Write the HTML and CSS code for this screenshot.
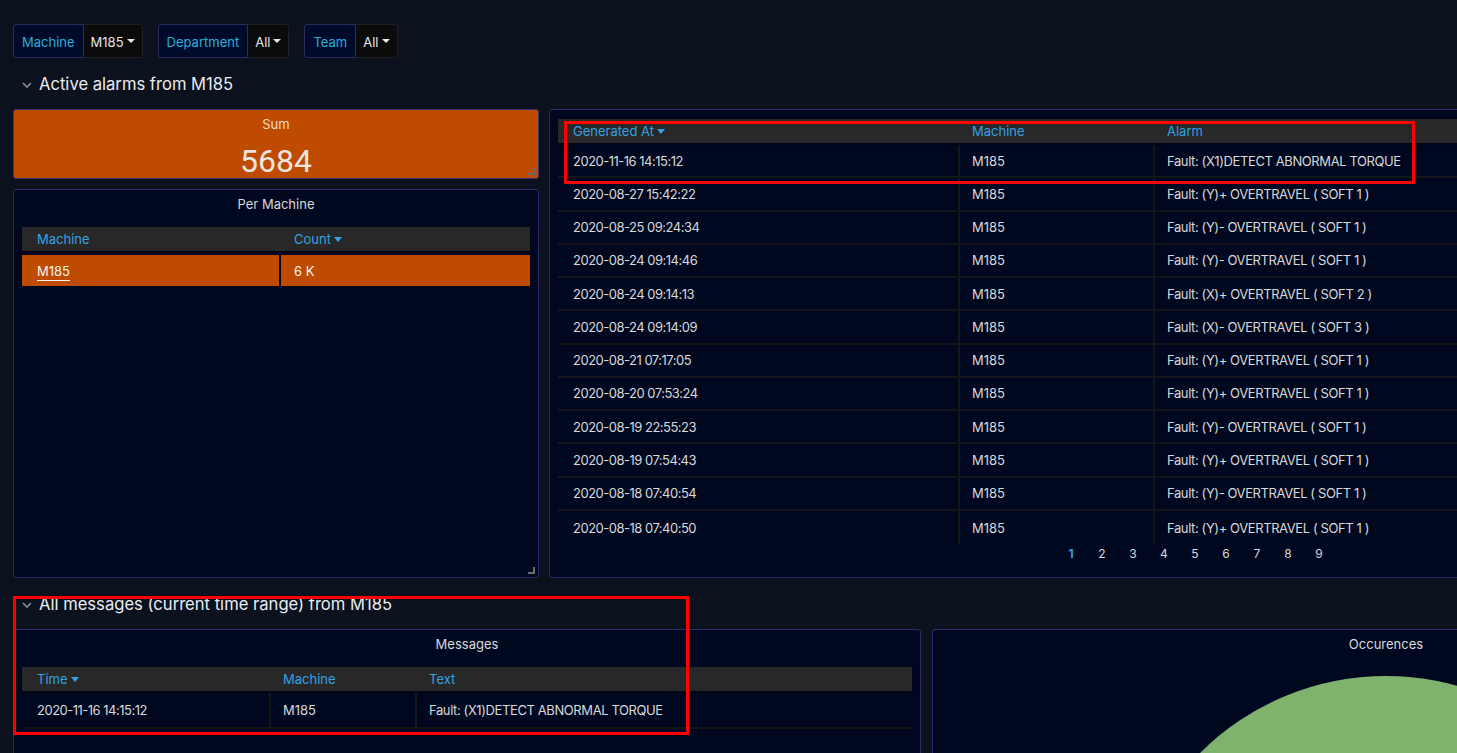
FILE: index.html
```html
<!DOCTYPE html>
<html>
<head>
<meta charset="utf-8">
<link rel="stylesheet" href="styles.css">
</head>
<body>
<div class="page">
  <div class="vars">
    <div class="var"><span class="var-label">Machine</span><span class="var-value">M185 <i class="caret"></i></span></div>
    <div class="var"><span class="var-label">Department</span><span class="var-value">All <i class="caret"></i></span></div>
    <div class="var"><span class="var-label">Team</span><span class="var-value">All <i class="caret"></i></span></div>
  </div>

  <div class="row-title">
    <svg class="chev" width="10" height="6" viewBox="0 0 10 6"><path d="M1 1 L5 5 L9 1" fill="none" stroke="#8e8e8e" stroke-width="1.6"/></svg>
    <span>Active alarms from M185</span>
  </div>

  <div class="grid1">
    <div class="col-left">
      <div class="panel stat resizable">
        <div class="panel-title stat-title">Sum</div>
        <div class="stat-value">5684</div>
      </div>
      <div class="panel per-machine resizable">
        <div class="panel-title">Per Machine</div>
        <div class="tbl pm">
          <div class="thead">
            <div class="th">Machine</div>
            <div class="th">Count <i class="sort"></i></div>
          </div>
          <div class="pm-row">
            <div class="pm-cell"><span class="link">M185</span></div>
            <div class="pm-cell">6 K</div>
          </div>
        </div>
      </div>
    </div>

    <div class="panel alarms">
      <div class="tbl al">
        <div class="thead">
          <div class="th">Generated At <i class="sort"></i></div>
          <div class="th">Machine</div>
          <div class="th">Alarm</div>
        </div>
        <div class="tbody">
          <div class="tr"><div class="td">2020-11-16 14:15:12</div><div class="td">M185</div><div class="td">Fault: (X1)DETECT ABNORMAL TORQUE</div></div>
          <div class="tr"><div class="td">2020-08-27 15:42:22</div><div class="td">M185</div><div class="td">Fault: (Y)+ OVERTRAVEL ( SOFT 1 )</div></div>
          <div class="tr"><div class="td">2020-08-25 09:24:34</div><div class="td">M185</div><div class="td">Fault: (Y)- OVERTRAVEL ( SOFT 1 )</div></div>
          <div class="tr"><div class="td">2020-08-24 09:14:46</div><div class="td">M185</div><div class="td">Fault: (Y)- OVERTRAVEL ( SOFT 1 )</div></div>
          <div class="tr"><div class="td">2020-08-24 09:14:13</div><div class="td">M185</div><div class="td">Fault: (X)+ OVERTRAVEL ( SOFT 2 )</div></div>
          <div class="tr"><div class="td">2020-08-24 09:14:09</div><div class="td">M185</div><div class="td">Fault: (X)- OVERTRAVEL ( SOFT 3 )</div></div>
          <div class="tr"><div class="td">2020-08-21 07:17:05</div><div class="td">M185</div><div class="td">Fault: (Y)+ OVERTRAVEL ( SOFT 1 )</div></div>
          <div class="tr"><div class="td">2020-08-20 07:53:24</div><div class="td">M185</div><div class="td">Fault: (Y)+ OVERTRAVEL ( SOFT 1 )</div></div>
          <div class="tr"><div class="td">2020-08-19 22:55:23</div><div class="td">M185</div><div class="td">Fault: (Y)- OVERTRAVEL ( SOFT 1 )</div></div>
          <div class="tr"><div class="td">2020-08-19 07:54:43</div><div class="td">M185</div><div class="td">Fault: (Y)+ OVERTRAVEL ( SOFT 1 )</div></div>
          <div class="tr"><div class="td">2020-08-18 07:40:54</div><div class="td">M185</div><div class="td">Fault: (Y)- OVERTRAVEL ( SOFT 1 )</div></div>
          <div class="tr last"><div class="td">2020-08-18 07:40:50</div><div class="td">M185</div><div class="td">Fault: (Y)+ OVERTRAVEL ( SOFT 1 )</div></div>
        </div>
      </div>
      <div class="pager">
        <span class="active">1</span><span>2</span><span>3</span><span>4</span><span>5</span><span>6</span><span>7</span><span>8</span><span>9</span>
      </div>
    </div>
  </div>

  <div class="row-title">
    <svg class="chev" width="10" height="6" viewBox="0 0 10 6"><path d="M1 1 L5 5 L9 1" fill="none" stroke="#8e8e8e" stroke-width="1.6"/></svg>
    <span>All messages (current time range) from M185</span>
  </div>

  <div class="grid2">
    <div class="panel messages">
      <div class="panel-title">Messages</div>
      <div class="tbl msg">
        <div class="thead">
          <div class="th">Time <i class="sort"></i></div>
          <div class="th">Machine</div>
          <div class="th">Text</div>
        </div>
        <div class="tr"><div class="td">2020-11-16 14:15:12</div><div class="td">M185</div><div class="td">Fault: (X1)DETECT ABNORMAL TORQUE</div></div>
      </div>
    </div>
    <div class="panel occ">
      <div class="panel-title">Occurences</div>
      <div class="pie-wrap">
        <svg class="pie" width="526" height="526" viewBox="0 0 526 526"><circle cx="263" cy="263" r="263" fill="#7eb26d"/></svg>
      </div>
    </div>
  </div>

  <div class="annot annot-1"></div>
  <div class="annot annot-2"></div>
</div>
</body>
</html>
```

FILE: styles.css
```css
* { box-sizing: border-box; }
html, body {
  margin: 0;
  padding: 0;
  width: 1457px;
  height: 753px;
  overflow: hidden;
  background: #0c111e;
}
body {
  font-family: Inter, "Noto Sans", sans-serif;
  font-size: 13px;
  color: #d8d9da;
}
.page {
  position: relative;
  padding: 24px 0 0 13px;
  width: 1900px;
}

/* variables */
.vars {
  display: flex;
  gap: 15px;
  height: 34px;
}
.var {
  display: flex;
  height: 34px;
}
.var-label {
  display: flex;
  align-items: center;
  padding: 1px 8px 0;
  background: #000a2a;
  border: 1px solid #2c2b5e;
  border-radius: 3px 0 0 3px;
  color: #26b0d6;
}
.var-value {
  display: flex;
  align-items: center;
  gap: 3px;
  padding: 1px 7px 0;
  background: #0b0b0c;
  border: 1px solid #1f1f24;
  border-left: none;
  border-radius: 0 3px 3px 0;
  color: #e6e6e6;
}
.caret {
  display: inline-block;
  width: 0;
  height: 0;
  border-left: 4px solid transparent;
  border-right: 4px solid transparent;
  border-top: 4px solid #e6e6e6;
  margin-top: -2px;
}

/* row titles */
.row-title {
  height: 51px;
  display: flex;
  align-items: center;
  gap: 7px;
  padding-left: 9px;
  font-size: 16.6px;
  color: #e9edf2;
}
.chev { margin-top: 3px; }

/* panels */
.panel {
  position: relative;
  background: #000820;
  border: 1px solid #2e2c68;
  border-radius: 3px;
}
.resizable::after {
  content: "";
  position: absolute;
  right: 3px;
  bottom: 3px;
  width: 5px;
  height: 5px;
  border-right: 2px solid #6b6b6b;
  border-bottom: 2px solid #6b6b6b;
}
.panel-title {
  text-align: center;
  height: 30px;
  line-height: 29px;
  color: #d8d9da;
}

.grid1 {
  display: grid;
  grid-template-columns: 526px 1292px;
  gap: 10px;
  height: 469px;
}
.col-left {
  display: flex;
  flex-direction: column;
  gap: 10px;
}
.stat {
  height: 70px;
  background: #bf4b00;
  border-color: #3a2f6a;
}
.stat-title { color: #f2dccb; height: 30px; line-height: 29px; }
.stat-value {
  text-align: center;
  font-family: Roboto, "Liberation Sans", sans-serif;
  font-size: 32px;
  line-height: 34px;
  margin-top: 4px;
  color: #ece6e0;
}
.per-machine { flex: 1; }

/* tables */
.tbl { margin: 0 8px; }
.thead {
  display: grid;
  height: 24px;
  background: #282828;
  box-shadow: 0 1px 2px rgba(0,0,0,0.5);
}
.th {
  display: flex;
  align-items: center;
  gap: 3px;
  color: #33a2e5;
}
.sort {
  display: inline-block;
  width: 0;
  height: 0;
  border-left: 4px solid transparent;
  border-right: 4px solid transparent;
  border-top: 5px solid #33a2e5;
}
.tr {
  display: grid;
  border-bottom: 2px solid #15161c;
}
.td {
  display: flex;
  align-items: center;
  border-left: 2px solid #16171c;
}
.td:first-child { border-left: none; letter-spacing: -0.5px; }
.td:nth-child(3) { letter-spacing: -0.4px; }

/* per machine */
.pm { margin-top: 7px; }
.pm .thead { grid-template-columns: 257px 251px; }
.pm .th:first-child { padding-left: 15px; }
.pm .th:last-child { padding-left: 15px; }
.pm-row {
  display: grid;
  grid-template-columns: 257px 249px;
  gap: 2px;
  margin-top: 4px;
  height: 31px;
}
.pm-cell {
  background: #bf4b00;
  display: flex;
  align-items: center;
  padding-left: 13px;
  color: #f4f4f4;
}
.pm-cell:first-child { padding-left: 15px; }
.link {
  border-bottom: 1px solid #f4f4f4;
  line-height: 17px;
  padding-top: 2px;
}

/* alarms */
.alarms { padding-top: 9px; }
.al .thead { grid-template-columns: 400px 195px 1fr; }
.al .th { padding-left: 15px; }
.al .th:nth-child(2), .al .th:nth-child(3) { padding-left: 14px; }
.al .tbody { margin-top: 2px; }
.al .tr {
  grid-template-columns: 400px 195px 1fr;
  height: 33.27px;
}
.al .tr.last { border-bottom: none; }
.al .td { padding-left: 15px; }
.al .td:nth-child(2), .al .td:nth-child(3) { padding-left: 12px; }
.pager {
  display: flex;
  justify-content: center;
  gap: 21px;
  margin-top: -1px;
  height: 20px;
  align-items: center;
  font-size: 12px;
  color: #d8d9da;
}
.pager span { width: 10px; text-align: center; }
.pager .active { color: #33a2e5; font-weight: 700; }

/* row 2 */
.grid2 {
  display: grid;
  grid-template-columns: 908px 908px;
  gap: 11px;
  height: 200px;
}
.msg { margin-top: 7px; }
.msg .thead { grid-template-columns: 247px 146px 1fr; }
.msg .th { padding-left: 15px; }
.msg .th:nth-child(2), .msg .th:nth-child(3) { padding-left: 14px; }
.msg .tr {
  grid-template-columns: 247px 146px 1fr;
  height: 36px;
  margin-top: 2px;
}
.msg .td { padding-left: 15px; }
.msg .td:nth-child(2), .msg .td:nth-child(3) { padding-left: 12px; }

.occ { overflow: hidden; }
.pie-wrap {
  display: flex;
  justify-content: center;
  padding-top: 16px;
}

/* annotation overlays */
.annot {
  position: absolute;
  border: 3px solid #ff0000;
  pointer-events: none;
}
.annot-1 { left: 564px; top: 121px; width: 851px; height: 63px; }
.annot-2 { left: 13px; top: 596px; width: 676px; height: 139px; }
```
